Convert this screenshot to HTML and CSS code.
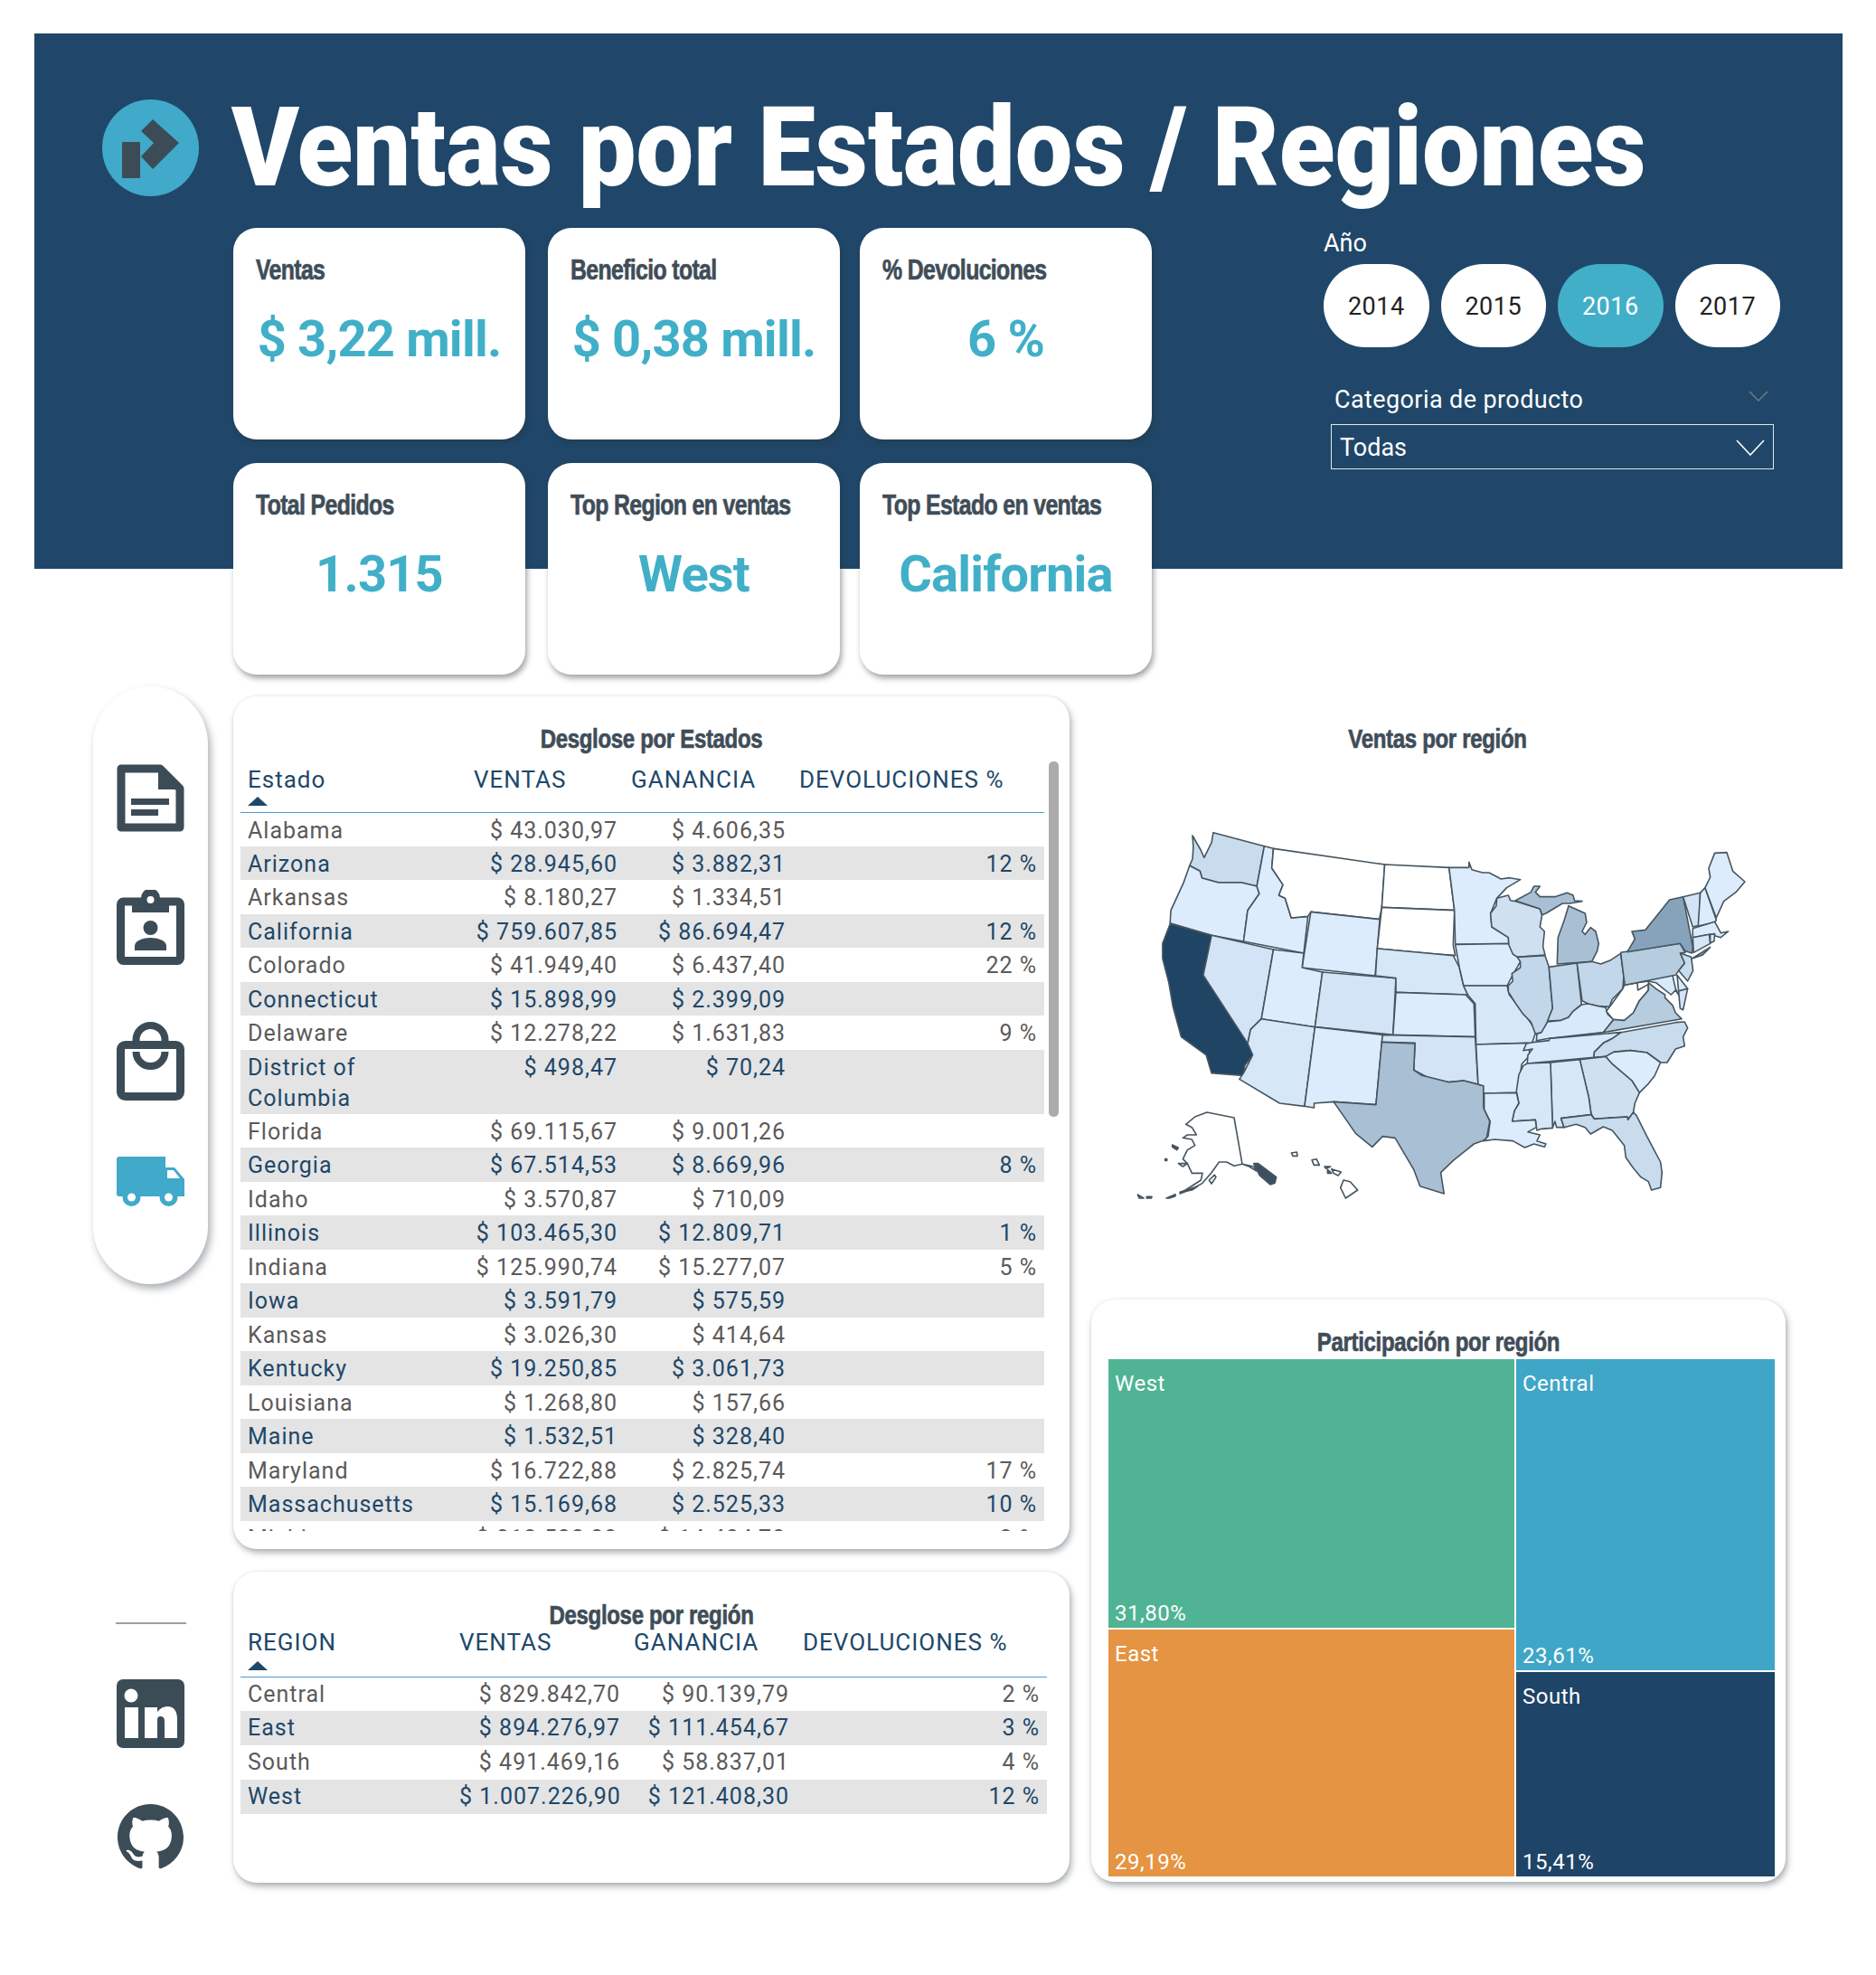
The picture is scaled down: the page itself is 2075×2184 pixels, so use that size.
FILE: index.html
```html
<!DOCTYPE html>
<html lang="es">
<head>
  <meta charset="UTF-8">
  <title>Ventas por Estados / Regiones</title>
  <link rel="stylesheet" href="styles.css">
</head>
<body>
  <header class="banner">
    <div class="title-row">
      <svg class="logo" viewBox="0 0 107 107">
        <circle cx="53.5" cy="53.5" r="53.5" fill="#41a9c9"/>
        <rect x="22" y="47" width="20" height="40" fill="#3c4c57"/>
        <polygon points="56,22 85,48 56,77 43,63 57,48 43,35" fill="#3c4c57"/>
      </svg>
      <h1 class="main-title">Ventas por Estados / Regiones</h1>
    </div>
    <div class="banner-body">
      <div class="kpi-grid">
        <div class="kpi"><div class="kpi-label">Ventas</div><div class="kpi-value">$ 3,22 mill.</div></div>
        <div class="kpi"><div class="kpi-label">Beneficio total</div><div class="kpi-value">$ 0,38 mill.</div></div>
        <div class="kpi"><div class="kpi-label">% Devoluciones</div><div class="kpi-value">6 %</div></div>
        <div class="kpi"><div class="kpi-label">Total Pedidos</div><div class="kpi-value">1.315</div></div>
        <div class="kpi"><div class="kpi-label">Top Region en ventas</div><div class="kpi-value">West</div></div>
        <div class="kpi"><div class="kpi-label">Top Estado en ventas</div><div class="kpi-value">California</div></div>
      </div>
      <div class="filters">
        <div class="filter-label">Año</div>
        <div class="years">
          <button class="year">2014</button>
          <button class="year">2015</button>
          <button class="year active">2016</button>
          <button class="year">2017</button>
        </div>
        <div class="cat-head">
          <span>Categoria de producto</span>
          <svg class="chev-small" viewBox="0 0 22 12"><polyline points="1,1 11,11 21,1" fill="none" stroke="#6d7a85" stroke-width="1.5"/></svg>
        </div>
        <div class="dropdown">
          <span>Todas</span>
          <svg class="chev" viewBox="0 0 32 18"><polyline points="1,1 16,17 31,1" fill="none" stroke="#fff" stroke-width="1.6"/></svg>
        </div>
      </div>
    </div>
  </header>

  <main class="content">
    <aside class="side">
      <nav class="side-pill">
        <svg class="ico" width="75" height="75" viewBox="0 0 75 75">
          <path d="M5 5H48L70 27V70H5Z" fill="none" stroke="#3c4c57" stroke-width="9" stroke-linejoin="round"/>
          <path d="M46 2L73 28H46Z" fill="#3c4c57"/>
          <rect x="16" y="38" width="42" height="7" fill="#3c4c57"/>
          <rect x="16" y="50" width="30" height="7" fill="#3c4c57"/>
        </svg>
        <svg class="ico" width="75" height="83" viewBox="0 0 75 83">
          <rect x="4.5" y="13" width="66" height="65.5" rx="3" fill="none" stroke="#3c4c57" stroke-width="9"/>
          <path d="M17 9H27A10.5 10.5 0 0 1 48 9H58V25H17Z" fill="#3c4c57"/>
          <circle cx="37.5" cy="11" r="4" fill="#fff"/>
          <circle cx="37.5" cy="42" r="8" fill="#3c4c57"/>
          <path d="M20 67V62C20 56 30 53 37.5 53S55 56 55 62V67Z" fill="#3c4c57"/>
        </svg>
        <svg class="ico" width="75" height="87" viewBox="0 0 75 87">
          <rect x="4.5" y="25.5" width="66" height="57" rx="5" fill="none" stroke="#3c4c57" stroke-width="9"/>
          <path d="M21.5 25V20A16 16 0 0 1 53.5 20V25" fill="none" stroke="#3c4c57" stroke-width="8"/>
          <path d="M21.5 33A16 16 0 0 0 53.5 33" fill="none" stroke="#3c4c57" stroke-width="8"/>
        </svg>
        <svg class="ico" width="75" height="56" viewBox="0 0 75 56">
          <path d="M3 0H54V12H64L75 25V44H3A3 3 0 0 1 0 41V3A3 3 0 0 1 3 0Z" fill="#41a9c9"/>
          <path d="M56 15H63L70 24H56Z" fill="#fff"/>
          <circle cx="16.5" cy="45" r="10" fill="#41a9c9"/>
          <circle cx="16.5" cy="45" r="4.5" fill="#fff"/>
          <circle cx="57.5" cy="45" r="10" fill="#41a9c9"/>
          <circle cx="57.5" cy="45" r="4.5" fill="#fff"/>
        </svg>
      </nav>
      <div class="side-line"></div>
      <svg class="social linkedin" width="75" height="76" viewBox="0 0 75 76">
        <rect width="75" height="76" rx="7" fill="#3c4c57"/>
        <circle cx="16" cy="18" r="7.5" fill="#fff"/>
        <rect x="9" y="31" width="15" height="34" fill="#fff"/>
        <path d="M31 31H45V36C48 32 52 30 56 30C64 30 67 36 67 44V65H53V47C53 43 52 41 48 41C45 41 45 44 45 47V65H31Z" fill="#fff"/>
      </svg>
      <svg class="social" width="75" height="73" viewBox="0 0 16 16">
        <path fill="#3c4c57" d="M8 0C3.58 0 0 3.58 0 8c0 3.54 2.29 6.53 5.47 7.59.4.07.55-.17.55-.38 0-.19-.01-.82-.01-1.49-2.01.37-2.53-.49-2.69-.94-.09-.23-.48-.94-.82-1.13-.28-.15-.68-.52-.01-.53.63-.01 1.08.58 1.23.82.72 1.21 1.87.87 2.33.66.07-.52.28-.87.51-1.07-1.78-.2-3.64-.89-3.64-3.95 0-.87.31-1.59.82-2.15-.08-.2-.36-1.02.08-2.12 0 0 .67-.21 2.2.82.64-.18 1.32-.27 2-.27.68 0 1.36.09 2 .27 1.53-1.04 2.2-.82 2.2-.82.44 1.1.16 1.92.08 2.12.51.56.82 1.27.82 2.15 0 3.07-1.87 3.75-3.65 3.95.29.25.54.73.54 1.48 0 1.07-.01 1.93-.01 2.2 0 .21.15.46.55.38A8.013 8.013 0 0016 8c0-4.42-3.58-8-8-8z"/>
      </svg>
    </aside>

    <section class="center">
      <div class="card states-card">
        <h2 class="card-title">Desglose por Estados</h2>
        <div class="table-wrap">
          <div class="table-clip">
            <table class="data states">
              <colgroup><col class="c1"><col class="c2"><col class="c3"><col class="c4"></colgroup>
              <thead>
                <tr><th>Estado<span class="sort"></span></th><th>VENTAS</th><th>GANANCIA</th><th>DEVOLUCIONES %</th></tr>
              </thead>
              <tbody>
                <tr><td>Alabama</td><td>$ 43.030,97</td><td>$ 4.606,35</td><td></td></tr>
                <tr><td>Arizona</td><td>$ 28.945,60</td><td>$ 3.882,31</td><td>12 %</td></tr>
                <tr><td>Arkansas</td><td>$ 8.180,27</td><td>$ 1.334,51</td><td></td></tr>
                <tr><td>California</td><td>$ 759.607,85</td><td>$ 86.694,47</td><td>12 %</td></tr>
                <tr><td>Colorado</td><td>$ 41.949,40</td><td>$ 6.437,40</td><td>22 %</td></tr>
                <tr><td>Connecticut</td><td>$ 15.898,99</td><td>$ 2.399,09</td><td></td></tr>
                <tr><td>Delaware</td><td>$ 12.278,22</td><td>$ 1.631,83</td><td>9 %</td></tr>
                <tr><td>District of<br>Columbia</td><td>$ 498,47</td><td>$ 70,24</td><td></td></tr>
                <tr><td>Florida</td><td>$ 69.115,67</td><td>$ 9.001,26</td><td></td></tr>
                <tr><td>Georgia</td><td>$ 67.514,53</td><td>$ 8.669,96</td><td>8 %</td></tr>
                <tr><td>Idaho</td><td>$ 3.570,87</td><td>$ 710,09</td><td></td></tr>
                <tr><td>Illinois</td><td>$ 103.465,30</td><td>$ 12.809,71</td><td>1 %</td></tr>
                <tr><td>Indiana</td><td>$ 125.990,74</td><td>$ 15.277,07</td><td>5 %</td></tr>
                <tr><td>Iowa</td><td>$ 3.591,79</td><td>$ 575,59</td><td></td></tr>
                <tr><td>Kansas</td><td>$ 3.026,30</td><td>$ 414,64</td><td></td></tr>
                <tr><td>Kentucky</td><td>$ 19.250,85</td><td>$ 3.061,73</td><td></td></tr>
                <tr><td>Louisiana</td><td>$ 1.268,80</td><td>$ 157,66</td><td></td></tr>
                <tr><td>Maine</td><td>$ 1.532,51</td><td>$ 328,40</td><td></td></tr>
                <tr><td>Maryland</td><td>$ 16.722,88</td><td>$ 2.825,74</td><td>17 %</td></tr>
                <tr><td>Massachusetts</td><td>$ 15.169,68</td><td>$ 2.525,33</td><td>10 %</td></tr>
                <tr><td>Michigan</td><td>$ 213.523,00</td><td>$ 14.404,70</td><td>2 %</td></tr>
              </tbody>
            </table>
          </div>
          <div class="scrollbar"></div>
        </div>
      </div>

      <div class="card region-card">
        <h2 class="card-title">Desglose por región</h2>
        <table class="data regions">
          <colgroup><col class="r1"><col class="r2"><col class="r3"><col class="r4"></colgroup>
          <thead>
            <tr><th>REGION<span class="sort"></span></th><th>VENTAS</th><th>GANANCIA</th><th>DEVOLUCIONES %</th></tr>
          </thead>
          <tbody>
            <tr><td>Central</td><td>$ 829.842,70</td><td>$ 90.139,79</td><td>2 %</td></tr>
            <tr><td>East</td><td>$ 894.276,97</td><td>$ 111.454,67</td><td>3 %</td></tr>
            <tr><td>South</td><td>$ 491.469,16</td><td>$ 58.837,01</td><td>4 %</td></tr>
            <tr><td>West</td><td>$ 1.007.226,90</td><td>$ 121.408,30</td><td>12 %</td></tr>
          </tbody>
        </table>
      </div>
    </section>

    <section class="right">
      <h2 class="card-title map-title">Ventas por región</h2>
      <svg class="usmap" viewBox="0 0 1568 1440" preserveAspectRatio="none">
        <g class="st">
          <polygon fill="#c8dcee" points="172,72 174,110 172,150 165,172 190,190 195,213 235,228 290,228 327,240 345,107 222,62 218,95 200,145 192,120"/>
          <polygon fill="#dcecfd" points="165,172 150,230 120,320 118,362 218,403 295,423 305,320 333,265 327,240 290,228 235,228 195,213 190,190"/>
          <polygon fill="#1f4464" points="118,365 218,403 198,535 308,760 317,800 298,835 295,868 218,860 205,800 145,740 125,640 115,560 100,480 100,430"/>
          <polygon fill="#d2e4f5" points="218,403 367,450 338,680 312,715 305,762 198,535"/>
          <polygon fill="#dcecfd" points="345,107 367,115 363,180 390,235 380,270 395,280 410,345 450,340 440,462 295,423 305,320 333,265 327,240"/>
          <polygon fill="#ffffff" points="367,115 635,168 628,310 622,350 457,325 450,340 410,345 395,280 380,270 390,235 363,180"/>
          <polygon fill="#dcecfd" points="457,325 623,350 612,537 436,510"/>
          <polygon fill="#dcecfd" points="367,450 440,462 436,510 485,525 467,707 338,680"/>
          <polygon fill="#d2e4f5" points="485,525 662,545 655,733 467,707"/>
          <polygon fill="#d6e7f8" points="338,680 467,707 442,970 382,960 285,880 295,860 317,800 305,762 312,715"/>
          <polygon fill="#dcecfd" points="467,707 630,733 628,760 614,965 512,955 465,960 465,975 442,970"/>
          <polygon fill="#ffffff" points="635,168 790,178 803,320 628,310"/>
          <polygon fill="#ffffff" points="628,310 803,320 800,435 805,470 760,465 617,447"/>
          <polygon fill="#d6e7f8" points="617,447 760,465 800,470 815,510 825,570 835,600 662,592 662,545 613,537"/>
          <polygon fill="#dcecfd" points="662,592 830,600 850,630 853,740 655,733"/>
          <polygon fill="#d2e4f5" points="630,733 853,740 860,897 825,885 790,890 740,875 705,850 708,760 628,757"/>
          <polygon fill="#a9bfd4" points="628,757 708,762 705,850 725,868 760,880 790,890 825,885 873,902 873,975 888,1020 880,1080 850,1095 800,1150 770,1190 778,1260 720,1235 705,1180 660,1075 630,1070 605,1105 565,1060 512,955 614,965"/>
          <polygon fill="#dcecfd" points="790,178 838,178 838,160 845,185 871,195 886,195 900,205 915,216 936,212 962,218 929,245 905,280 890,330 893,375 933,410 934,432 805,433 803,320"/>
          <polygon fill="#dcecfd" points="805,433 935,430 962,490 945,530 930,570 825,570 815,510"/>
          <polygon fill="#d6e7f8" points="825,570 930,570 935,600 970,660 1000,720 990,760 855,765 853,630 835,600"/>
          <polygon fill="#dcecfd" points="855,765 980,760 985,800 965,830 955,925 873,927 873,902 860,897"/>
        </g>
        <g class="st" transform="translate(871 90) scale(.726 1)">
          <polygon fill="#cfe0f0" points="47,190 85,180 92,197 110,200 190,225 197,245 190,285 205,300 200,350 207,378 115,385 100,375 87,345 85,320 30,285 26,240 45,215"/>
          <polygon fill="#a9bfd4" points="108,198 160,170 170,150 190,150 175,170 190,185 240,185 280,172 300,180 305,198 330,200 290,207 265,207 235,225 210,240 197,245 190,225"/>
          <polygon fill="#a9bfd4" points="247,408 250,320 270,265 285,215 340,240 345,270 330,300 340,310 358,287 375,300 385,340 380,365 362,400"/>
          <polygon fill="#c3d7ea" points="115,385 207,380 220,418 225,480 232,555 215,600 215,625 195,635 175,640 160,600 135,575 110,540 85,500 85,480 100,465 97,440 125,420 125,400"/>
          <polygon fill="#c3d7ea" points="220,418 313,405 328,543 300,565 285,585 260,595 215,597 232,555"/>
          <polygon fill="#c3d7ea" points="313,405 362,400 392,408 425,395 458,373 468,450 465,490 430,525 420,550 385,548 350,540 330,530"/>
          <polygon fill="#d8e9fb" points="215,600 260,595 285,585 300,565 328,543 350,540 385,548 408,552 415,575 435,592 400,635 220,655 178,662 180,640 195,635"/>
          <polygon fill="#ffffff" points="470,478 513,470 515,495 550,475 550,495 520,530 500,570 470,595 440,600 410,565 425,545 465,490"/>
          <polygon fill="#b6cde0" points="550,470 575,490 605,510 605,520 630,545 640,570 660,590 400,635 435,592 470,595 500,570 520,530 550,495"/>
          <polygon fill="#d8e9fb" points="470,478 630,445 640,490 650,510 660,525 640,495 625,510 600,490 575,470 550,465 513,470"/>
          <polygon fill="#d8e9fb" points="645,445 680,490 650,498"/>
          <polygon fill="#d2e4f5" points="650,498 680,490 665,560 655,555"/>
          <polygon fill="#c8dcee" points="655,372 692,385 698,430 680,465 650,430 670,405"/>
          <polygon fill="#b6cde0" points="458,370 655,340 672,370 655,372 670,405 650,430 640,445 472,478 468,450"/>
          <polygon fill="#86a3bb" points="480,368 505,325 495,300 540,295 580,245 620,195 665,185 697,350 695,372 672,365 655,340"/>
          <polygon fill="#d2e4f5" points="665,185 722,172 718,280 697,285"/>
          <polygon fill="#dcecfd" points="722,172 738,155 775,262 770,270 715,282"/>
          <polygon fill="#dcecfd" points="738,155 755,120 750,90 770,40 810,38 830,100 870,135 840,170 800,200 775,255"/>
          <polygon fill="#dcecfd" points="697,290 770,268 790,305 815,300 790,320 755,310 697,320"/>
          <polygon fill="#d6e7f8" points="697,320 752,310 755,340 700,370"/>
          <polygon fill="#dcecfd" points="755,310 770,308 768,332 755,338"/>
          <polygon fill="#86a3bb" points="695,390 755,352 730,378"/>
        </g>
        <g class="st" transform="translate(871 690) scale(.726 1)">
          <polygon fill="#c8dcee" points="458,35 640,2 670,0 680,20 665,50 670,80 640,90 612,135 590,135 545,102 490,95 435,100 408,115 368,118 370,100 400,70 430,55"/>
          <polygon fill="#d8e9fb" points="165,68 220,62 222,55 458,35 430,55 400,70 370,100 368,118 148,138 150,110 165,90 135,95 145,72"/>
          <polygon fill="#dcecfd" points="408,115 435,100 490,95 545,102 590,135 570,180 550,205 520,235 495,195 430,140"/>
          <polygon fill="#cfe0f0" points="322,125 408,115 430,140 495,195 520,235 505,270 500,300 482,325 480,315 370,322 360,305 352,250"/>
          <polygon fill="#d6e7f8" points="225,135 322,125 352,250 360,308 260,320 270,350 245,350 240,330 232,352"/>
          <polygon fill="#d6e7f8" points="148,138 225,135 232,352 195,355 180,360 175,325 98,330 105,295 120,270 112,230 120,175 135,145"/>
          <polygon fill="#dcecfd" points="5,237 112,235 120,270 105,295 98,330 175,325 178,350 150,365 190,375 180,395 210,405 205,415 170,405 140,417 100,395 40,390 2,395 18,380 25,330 5,290"/>
          <polygon fill="#c8dcee" points="260,320 360,308 370,322 480,315 482,325 500,300 510,310 545,380 590,465 595,500 590,550 560,558 550,530 525,515 500,485 475,450 470,410 430,360 400,348 358,372 340,350 310,340 270,350"/>
        </g>
        <g class="st" transform="translate(21.8 930) scale(.726 1)">
          <polygon fill="#ffffff" points="255,60 345,78 372,232 345,238 320,225 295,225 270,260 240,295 205,315 165,330 235,285 240,262 205,262 190,230 175,215 190,185 215,170 205,150 175,145 190,135 220,135 205,110 185,100 215,75"/>
          <polygon fill="#3e5060" points="410,230 425,230 485,275 480,295 465,300 430,270"/>
          <polygon fill="#ffffff" points="372,232 410,240 420,255 395,240"/>
          <polygon fill="#3e5060" points="165,325 225,305 205,318"/>
          <polygon fill="#3e5060" points="120,345 150,332 150,338 130,345"/>
          <polygon fill="#ffffff" points="25,333 45,345 30,345"/>
          <polygon fill="#3e5060" points="55,340 72,340 70,345 55,345"/>
          <polygon fill="#3e5060" points="140,168 160,178 155,185 140,175"/>
          <polygon fill="#3e5060" points="116,215 122,215 122,220 116,220"/>
          <polygon fill="#ffffff" points="262,285 280,268 285,275 270,297"/>
          <polygon fill="#ffffff" points="160,230 190,230 175,240"/>
          <polygon fill="#ffffff" points="535,195 553,192 555,205 540,205"/>
          <polygon fill="#ffffff" points="603,218 618,215 628,235 610,235"/>
          <polygon fill="#3e5060" points="645,240 665,240 650,247"/>
          <polygon fill="#3e5060" points="655,250 668,262 655,262"/>
          <polygon fill="#ffffff" points="668,248 700,258 690,270 675,262"/>
          <polygon fill="#ffffff" points="708,285 730,290 755,318 715,345 698,310"/>
        </g>
      </svg>
      <div class="card tree-card">
        <h2 class="card-title">Participación por región</h2>
        <div class="tree">
          <div class="tree-col left-col">
            <div class="tile west"><span>West</span><span>31,80%</span></div>
            <div class="tile east"><span>East</span><span>29,19%</span></div>
          </div>
          <div class="tree-col right-col">
            <div class="tile centr"><span>Central</span><span>23,61%</span></div>
            <div class="tile south"><span>South</span><span>15,41%</span></div>
          </div>
        </div>
      </div>
    </section>
  </main>
</body>
</html>
```

FILE: styles.css
```css
* {
  box-sizing: border-box;
}

body {
  margin: 0;
  background: #fff;
  font-family: Roboto, sans-serif;
  width: 2075px;
  height: 2184px;
  overflow: hidden;
}

.banner {
  margin: 37px 37px 0 38px;
  height: 592px;
  padding: 73px 0 0 75px;
  background: #204769;
}

.title-row {
  display: flex;
  align-items: center;
  gap: 36px;
  height: 107px;
  margin-bottom: 35px;
}

.logo {
  width: 107px;
  height: 107px;
  flex: none;
}

.main-title {
  margin: 0;
  color: #fff;
  font-family: Roboto, sans-serif;
  font-weight: 900;
  font-size: 122px;
  line-height: 107px;
  white-space: nowrap;
  transform: scaleX(0.929);
  transform-origin: left center;
}

.banner-body {
  display: flex;
  margin-left: 145px;
}

.kpi-grid {
  display: grid;
  grid-template-columns: 348px 345px 323px;
  grid-auto-rows: 234px;
  row-gap: 26px;
  flex: none;
}

.kpi {
  width: 323px;
  padding: 28px 25px 0;
  background: #fff;
  border-radius: 26px;
  box-shadow: 2px 4px 6px rgba(40, 50, 60, 0.45);
}

.kpi-label, .card-title {
  font-family: "Liberation Sans", sans-serif;
  font-weight: 700;
  color: #3f4d58;
  -webkit-text-stroke: 0.7px #3f4d58;
  white-space: nowrap;
}

.kpi-label {
  font-size: 32px;
  line-height: 36px;
  letter-spacing: -0.8px;
  transform: scaleX(0.775);
  transform-origin: left center;
}

.kpi-value {
  margin: 25px -25px 0;
  text-align: center;
  color: #41afc8;
  font-family: Roboto, sans-serif;
  font-weight: 700;
  font-size: 56px;
  line-height: 68px;
  letter-spacing: -0.8px;
  white-space: nowrap;
}

.filters {
  width: 505px;
  margin-left: 190px;
  color: #fff;
}

.filter-label {
  font-size: 27px;
  line-height: 32px;
  padding-top: 1px;
  height: 32px;
}

.years {
  display: flex;
  gap: 13px;
  margin-top: 8px;
}

.year {
  width: 116.5px;
  height: 92px;
  border: none;
  border-radius: 46px;
  background: #fff;
  color: #222;
  font-family: Roboto, sans-serif;
  font-size: 27px;
  letter-spacing: 0.5px;
  padding: 2px 0 0;
}

.year.active {
  background: #41afc8;
  color: #fff;
}

.cat-head {
  display: flex;
  justify-content: space-between;
  align-items: center;
  margin: 40px 13px 0 12px;
  font-size: 27px;
  line-height: 36px;
  letter-spacing: 0.4px;
}

.chev-small {
  width: 22px;
  height: 12px;
  margin-top: -8px;
}

.dropdown {
  display: flex;
  justify-content: space-between;
  align-items: center;
  width: 490px;
  height: 50px;
  margin: 9px 0 0 8px;
  padding: 1px 9px 0;
  border: 1.5px solid #dfe5ea;
  font-size: 27px;
}

.chev {
  width: 32px;
  height: 18px;
}

.content {
  display: flex;
  margin: 130px 0 0 103px;
}

.side {
  width: 127px;
  flex: none;
  display: flex;
  flex-direction: column;
  align-items: center;
}

.side-pill {
  width: 127px;
  height: 661px;
  padding-top: 86px;
  display: flex;
  flex-direction: column;
  align-items: center;
  background: #fff;
  border-radius: 64px;
  box-shadow: 3px 5px 8px rgba(50, 60, 70, 0.4);
}

.ico:nth-child(1) { margin-bottom: 64px; }
.ico:nth-child(2) { margin-bottom: 63px; }
.ico:nth-child(3) { margin-bottom: 62px; }

.side-line {
  width: 78px;
  height: 2px;
  margin-top: 374px;
  background: #9a9fa3;
}

.social {
  display: block;
}

.linkedin {
  margin-top: 61px;
  margin-bottom: 62px;
}

.center {
  width: 925px;
  margin: 11px 1px 0 28px;
  flex: none;
}

.card {
  background: #fff;
  border-radius: 26px;
  box-shadow: 2px 4px 7px rgba(50, 60, 70, 0.4), 0 0 3px rgba(50, 60, 70, 0.1);
}

.card-title {
  margin: 0;
  font-size: 30px;
  line-height: 40px;
  text-align: center;
  letter-spacing: -0.4px;
  transform: scaleX(0.8);
}

.states-card {
  height: 943px;
  padding-top: 27px;
}

.table-wrap {
  display: flex;
  margin: 0 0 0 8px;
}

.table-clip {
  width: 889px;
  height: 856px;
  overflow: hidden;
}

.scrollbar {
  width: 11px;
  height: 393px;
  margin: 5px 0 0 5px;
  border-radius: 5px;
  background: #ababab;
}

.data {
  border-collapse: collapse;
  table-layout: fixed;
  font-size: 25px;
  letter-spacing: 1px;
  width: 889px;
}

.c1 { width: 244px; }
.c2 { width: 180px; }
.c3 { width: 186px; }
.c4 { width: 279px; }

.r1 { width: 234px; }
.r2 { width: 193px; }
.r3 { width: 187px; }
.r4 { width: 278px; }

.data th {
  height: 61px;
  padding: 10px 0 0 8px;
  font-size: 26px;
  font-weight: 400;
  letter-spacing: 1px;
  text-align: left;
  vertical-align: top;
  color: #204769;
  border-bottom: 1.5px solid #4a9bd0;
  line-height: 30px;
  white-space: nowrap;
}

.states th:nth-child(2) {
  padding-left: 14px;
}

.sort {
  display: block;
  width: 0;
  height: 0;
  margin-top: 4px;
  border-left: 11px solid transparent;
  border-right: 11px solid transparent;
  border-bottom: 10px solid #204769;
}

.data td {
  height: 37.5px;
  padding: 3px 7px 0 8px;
  line-height: 34px;
  text-align: right;
  vertical-align: top;
  color: #5c5a5a;
  white-space: nowrap;
}

.data td:first-child {
  text-align: left;
}

.data td:last-child {
  padding-right: 8px;
}

.data tbody tr:nth-child(even) td {
  background: #e4e4e4;
  color: #204769;
}

.region-card {
  height: 344px;
  margin-top: 25px;
  padding: 28px 0 0 8px;
}

.region-card .card-title {
  margin-left: -8px;
}

.regions {
  width: 892px;
  margin-top: -5px;
}

.regions th {
  height: 53px;
  padding-top: 0;
}

.regions .sort {
  margin-top: 6px;
}

.regions td {
  height: 38px;
  padding-top: 2px;
}

.right {
  width: 770px;
  margin: 38px 0 0 21px;
  flex: none;
}

.map-title {
  width: 770px;
}

.usmap {
  display: block;
  width: 720px;
  height: 480px;
  margin: 63px 0 57px 35px;
}

.st polygon {
  stroke: #45555f;
  stroke-width: 1.6px;
  stroke-linejoin: round;
  vector-effect: non-scaling-stroke;
}

.tree-card {
  width: 768px;
  height: 644px;
  margin-left: 2px;
  padding: 28px 0 0 19px;
}

.tree-card .card-title {
  line-height: 38px;
  margin-right: 19px;
}

.tree {
  display: flex;
  gap: 2px;
  height: 572px;
}

.tree-col {
  display: flex;
  flex-direction: column;
  gap: 2px;
}

.left-col { width: 449px; }
.right-col { width: 286px; }

.tile {
  display: flex;
  flex-direction: column;
  justify-content: space-between;
  padding: 12px 7px 1px;
  color: #fff;
  font-size: 24px;
  line-height: 30px;
  letter-spacing: 0.5px;
}

.west { height: 297px; background: #50b494; }
.east { height: 273px; background: #e49443; }
.centr { height: 344px; background: #3fa6c7; }
.south { height: 226px; background: #1e4467; }
```
